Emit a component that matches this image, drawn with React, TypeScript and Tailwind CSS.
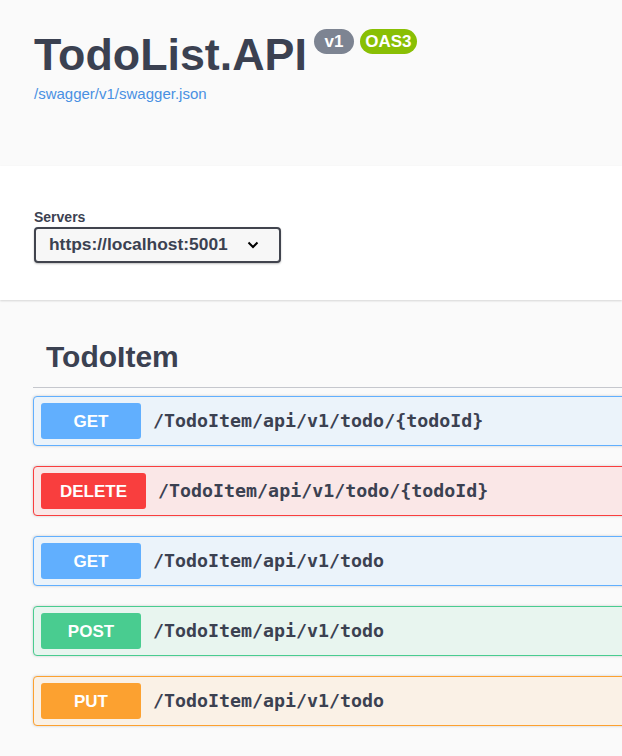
import React from "react";

type Op = {
  method: string;
  path: string;
  badge: string;
  border: string;
  bg: string;
};

const ops: Op[] = [
  { method: "GET", path: "/TodoItem/api/v1/todo/{todoId}", badge: "bg-[#61affe]", border: "border-[#61affe]", bg: "bg-[#ebf3fa]" },
  { method: "DELETE", path: "/TodoItem/api/v1/todo/{todoId}", badge: "bg-[#f93e3e]", border: "border-[#f93e3e]", bg: "bg-[#fae7e7]" },
  { method: "GET", path: "/TodoItem/api/v1/todo", badge: "bg-[#61affe]", border: "border-[#61affe]", bg: "bg-[#ebf3fa]" },
  { method: "POST", path: "/TodoItem/api/v1/todo", badge: "bg-[#49cc90]", border: "border-[#49cc90]", bg: "bg-[#e8f5ef]" },
  { method: "PUT", path: "/TodoItem/api/v1/todo", badge: "bg-[#fca130]", border: "border-[#fca130]", bg: "bg-[#faf1e6]" },
];

function OpBlock({ op }: { op: Op }) {
  return (
    <div
      className={`flex items-center border ${op.border} ${op.bg} rounded-[4px] pl-[7px] py-[6px] mb-[20px] shadow-[0_0_3px_rgba(0,0,0,0.19)]`}
    >
      <span
        className={`${op.badge} min-w-[100px] h-[36px] px-[19px] rounded-[3px] flex items-center justify-center text-white font-bold text-[17px] leading-none`}
      >
        {op.method}
      </span>
      <span className="ml-[12px] font-['DejaVu_Sans_Mono',monospace] font-bold text-[18.3px] text-[#3b4151] leading-none">
        {op.path}
      </span>
    </div>
  );
}

export default function App() {
  return (
    <div className="min-h-screen w-full overflow-hidden bg-[#fafafa] font-['Liberation_Sans',Arial,sans-serif] text-[#3b4151]">
      {/* Info header */}
      <header className="h-[166px] pl-[34px] pt-[32px]">
        <div className="flex items-start">
          <h1 className="text-[44.8px] font-bold leading-none">TodoList.API</h1>
          <div className="flex gap-[6px] ml-[7px] mt-[-3px]">
            <span className="w-[40px] h-[25px] rounded-full bg-[#7d8492] text-white font-bold text-[17px] leading-none flex items-center justify-center">
              v1
            </span>
            <span className="w-[57px] h-[25px] rounded-full bg-[#89bf04] text-white font-bold text-[17px] leading-none flex items-center justify-center">
              OAS3
            </span>
          </div>
        </div>
        <a href="#" className="block mt-[9px] text-[15px] leading-none text-[#4990e2]">
          /swagger/v1/swagger.json
        </a>
      </header>

      {/* Servers */}
      <section className="bg-white pl-[34px] pt-[44px] pb-[37px] shadow-[0_1px_2px_0_rgba(0,0,0,0.15)]">
        <div className="text-[14px] font-bold leading-none">Servers</div>
        <div className="mt-[3px] w-[247px] h-[36px] border-2 border-[#41444e] rounded-[4px] bg-[#f7f7f7] shadow-[0_1px_2px_0_rgba(0,0,0,0.25)] flex items-center justify-between pl-[13px] pr-[20px]">
          <span className="text-[17.4px] font-bold leading-none">https://localhost:5001</span>
          <svg width="12" height="8" viewBox="0 0 12 8" fill="none">
            <polyline points="1.5,1.5 6,6 10.5,1.5" stroke="#000" strokeWidth="2" />
          </svg>
        </div>
      </section>

      {/* Tag group */}
      <section className="pl-[33px] w-[1000px]">
        <h2 className="pt-[42px] pb-[15px] pl-[13px] text-[30px] font-bold leading-none border-b border-[#c5c7cd]">
          TodoItem
        </h2>
        <div className="mt-[8px]">
          {ops.map((op, i) => (
            <OpBlock key={i} op={op} />
          ))}
        </div>
      </section>
    </div>
  );
}
